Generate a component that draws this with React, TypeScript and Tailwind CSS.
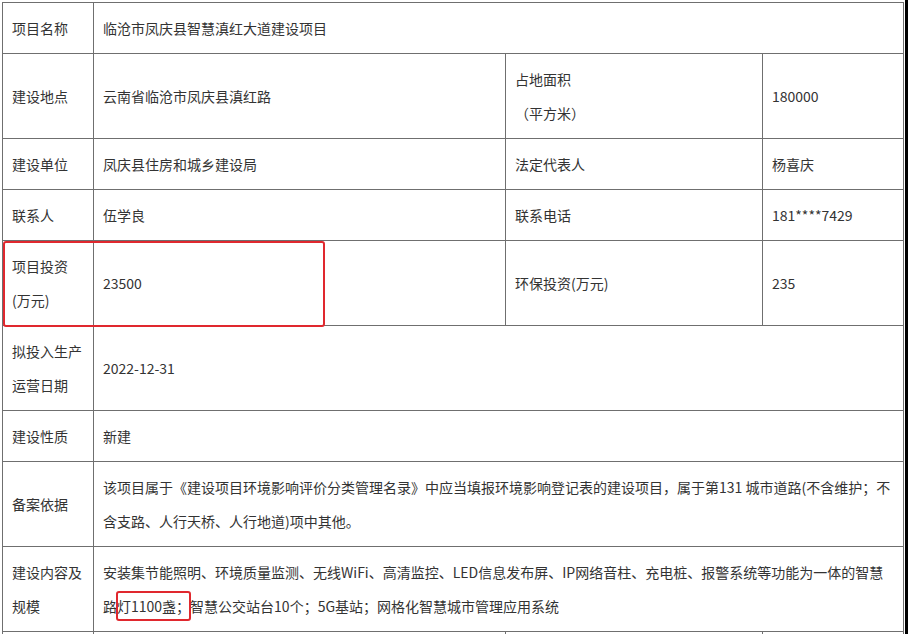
const cell = "border border-[#6f6f6f] px-[9px] py-2 align-middle";

export default function App() {
  return (
    <div
      className="flex h-[634px] w-[908px] overflow-hidden bg-white text-[14px] leading-[34px] text-[#333]"
      style={{ fontFamily: '"Noto Sans CJK SC", "Microsoft YaHei", sans-serif' }}
    >
      <div className="relative w-[905px] pl-[2px] pt-[2px]">
        <table className="w-[901px] table-fixed border-collapse">
          <colgroup>
            <col className="w-[91px]" />
            <col className="w-[412px]" />
            <col className="w-[257px]" />
            <col className="w-[141px]" />
          </colgroup>
          <tbody>
            <tr>
              <td className={cell}>项目名称</td>
              <td className={cell} colSpan={3}>
                临沧市凤庆县智慧滇红大道建设项目
              </td>
            </tr>
            <tr>
              <td className={cell}>建设地点</td>
              <td className={cell}>云南省临沧市凤庆县滇红路</td>
              <td className={cell}>
                占地面积
                <br />
                （平方米）
              </td>
              <td className={cell}>180000</td>
            </tr>
            <tr>
              <td className={cell}>建设单位</td>
              <td className={cell}>凤庆县住房和城乡建设局</td>
              <td className={cell}>法定代表人</td>
              <td className={cell}>杨喜庆</td>
            </tr>
            <tr>
              <td className={cell}>联系人</td>
              <td className={cell}>伍学良</td>
              <td className={cell}>联系电话</td>
              <td className={cell}>181****7429</td>
            </tr>
            <tr>
              <td className={cell}>
                项目投资
                <br />
                (万元)
              </td>
              <td className={cell}>23500</td>
              <td className={cell}>环保投资(万元)</td>
              <td className={cell}>235</td>
            </tr>
            <tr>
              <td className={cell}>
                拟投入生产
                <br />
                运营日期
              </td>
              <td className={cell} colSpan={3}>
                2022-12-31
              </td>
            </tr>
            <tr>
              <td className={cell}>建设性质</td>
              <td className={cell} colSpan={3}>
                新建
              </td>
            </tr>
            <tr>
              <td className={cell}>备案依据</td>
              <td className={cell} colSpan={3}>
                <span className="block whitespace-nowrap">
                  该项目属于《建设项目环境影响评价分类管理名录》中应当填报环境影响登记表的建设项目，属于第131 城市道路(不含维护；不
                </span>
                <span className="block">含支路、人行天桥、人行地道)项中其他。</span>
              </td>
            </tr>
            <tr>
              <td className={cell}>
                建设内容及
                <br />
                规模
              </td>
              <td className={cell} colSpan={3}>
                <span className="block whitespace-nowrap">
                  安装集节能照明、环境质量监测、无线WiFi、高清监控、LED信息发布屏、IP网络音柱、充电桩、报警系统等功能为一体的智慧
                </span>
                <span className="block">
                  路
                  <span className="relative">
                    灯1100盏；
                    <span className="absolute left-[-1px] right-[-1px] top-1/2 h-[30px] -translate-y-1/2 rounded-[3px] border-[2.5px] border-[#e0282e]" />
                  </span>
                  智慧公交站台10个；5G基站；网格化智慧城市管理应用系统
                </span>
              </td>
            </tr>
            <tr>
              <td className={cell}>&nbsp;</td>
              <td className={cell}>&nbsp;</td>
              <td className={cell}>&nbsp;</td>
              <td className={cell}>&nbsp;</td>
            </tr>
          </tbody>
        </table>
        {/* highlight around 项目投资 row */}
        <div className="absolute left-[3px] top-[241px] h-[86px] w-[322px] rounded-[3px] border-[2.5px] border-[#e0282e]" />
      </div>
      <div className="w-[3px] bg-black" />
    </div>
  );
}
